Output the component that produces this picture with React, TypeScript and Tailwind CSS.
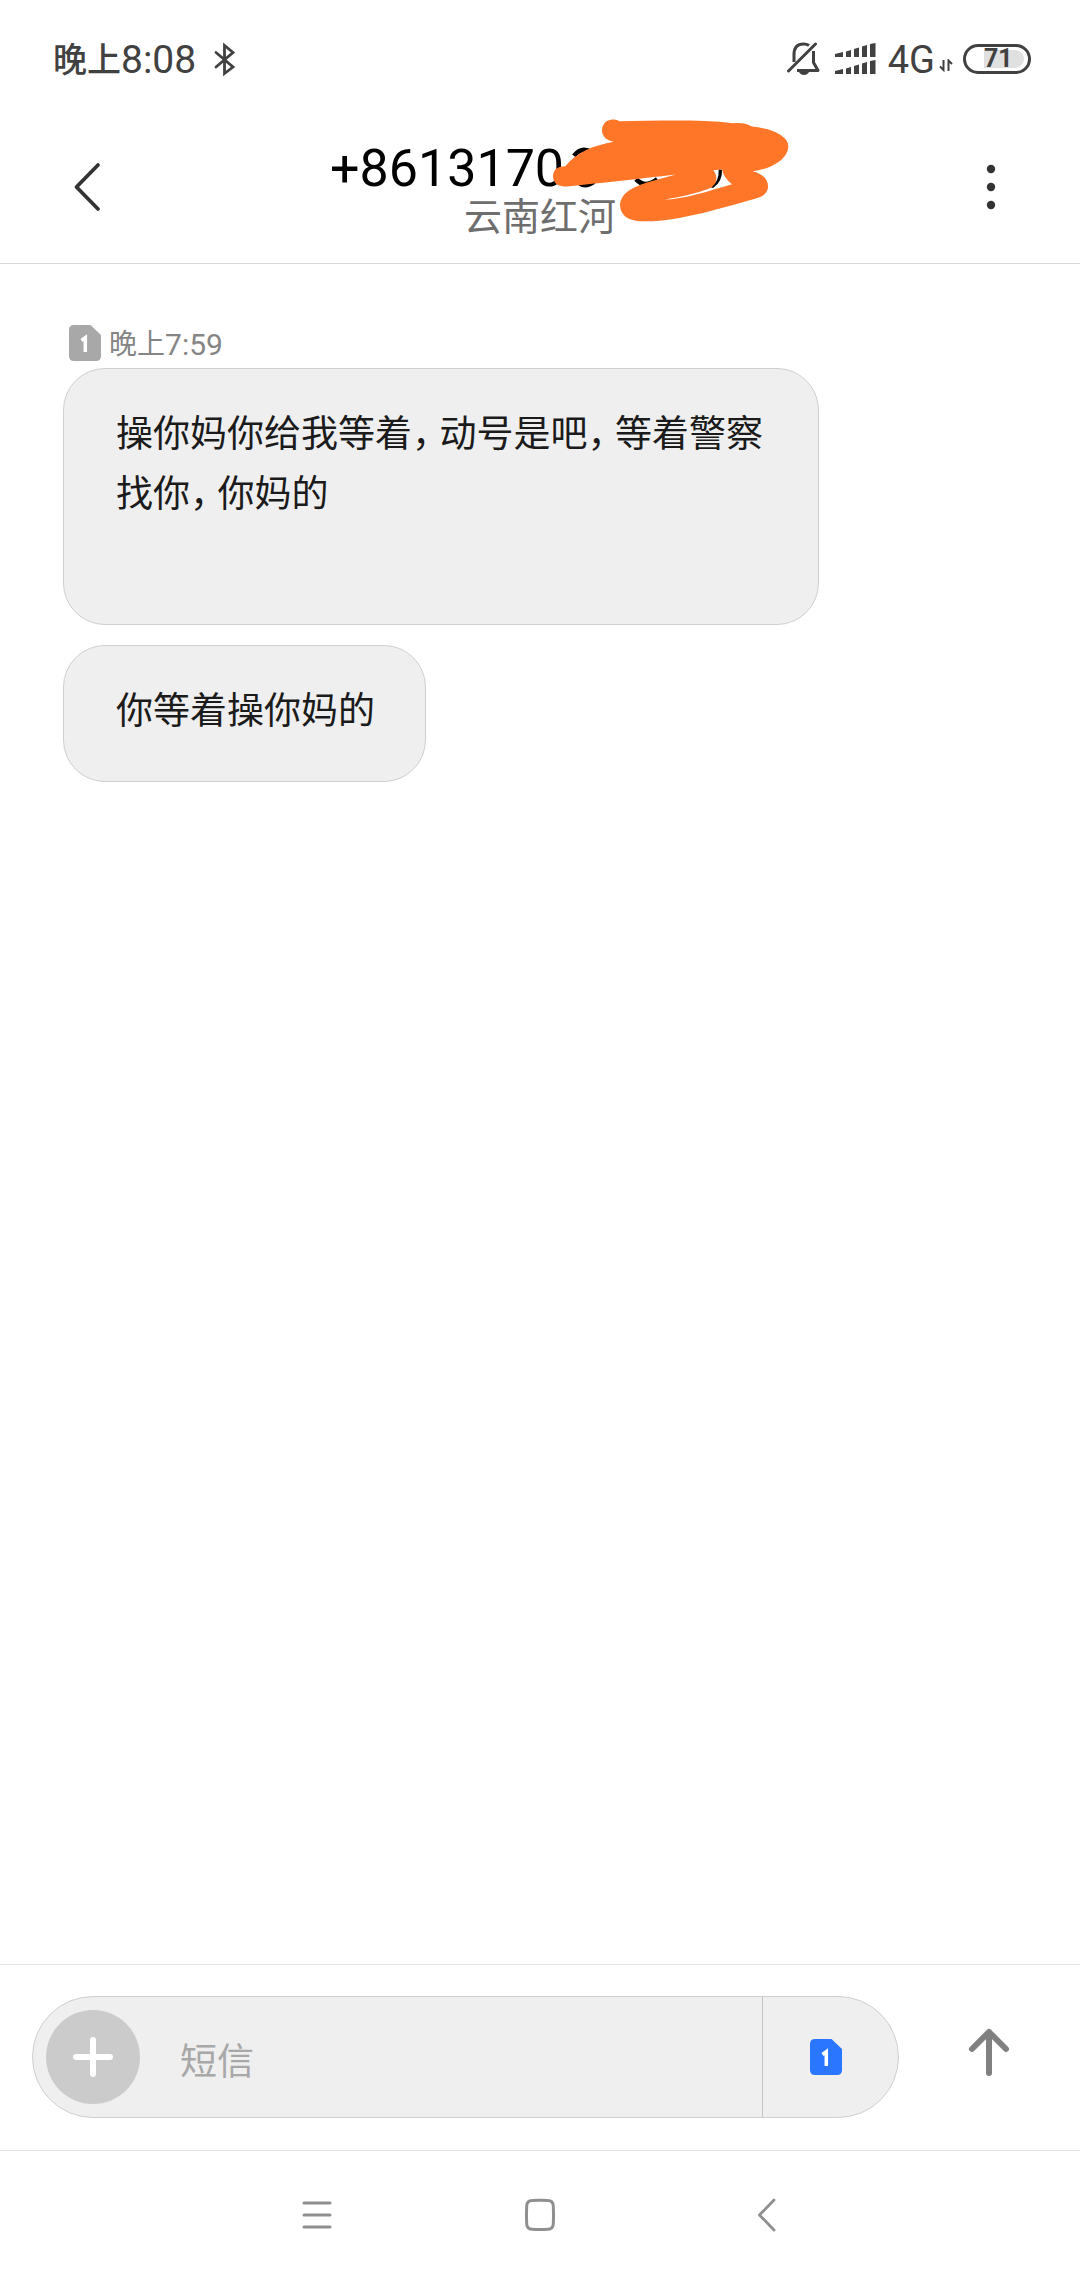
import { useState } from 'react';
import type { ReactNode } from 'react';

function SimIcon({ className }: { className: string }) {
  return (
    <svg width="32" height="36" viewBox="0 0 32 36" className={className} aria-hidden="true">
      <path d="M5 0H21.500L32 10V31Q32 36 27 36H5Q0 36 0 31V5Q0 0 5 0Z" fill="currentColor" />
      <path d="M12.500 15.500L16.300 12.700V27" fill="none" stroke="#fff" strokeWidth="3.500" />
    </svg>
  );
}

function BluetoothIcon() {
  return (
    <svg width="22" height="36" viewBox="0 0 22 36" className="ml-[18px]" fill="none" stroke="currentColor" strokeWidth="2.800" strokeLinecap="round" strokeLinejoin="miter" aria-hidden="true">
      <path d="M2 10.500L19 25L10.500 31.500V3.500L19 10.500L2 25" />
    </svg>
  );
}

function MutedBellIcon() {
  return (
    <svg width="34" height="34" viewBox="0 0 34 34" fill="none" stroke="currentColor" strokeWidth="3" aria-hidden="true">
      <path d="M1.500 29L28.500 2" strokeLinecap="round" />
      <path d="M7 20V12.500Q7 2 16.500 2Q20 2 22 3.500" />
      <path d="M26.500 9V20.500L31 28.500H10" strokeLinejoin="round" />
      <path d="M12 30H22Q20.500 33 17 33T12 30Z" fill="currentColor" stroke="none" />
    </svg>
  );
}

function SignalIcon() {
  return (
    <svg width="41" height="32" viewBox="0 0 41 32" fill="currentColor" aria-hidden="true">
      <path d="M0 11L8 9V14H0ZM11 8.500L16 7V14H11ZM19 6L24 4.500V14H19ZM27 3.500L32 2V14H27ZM35 1L40.500 0V14H35Z" />
      <path d="M0 28L8 26V31H0ZM11 25.500L16 24V31H11ZM19 23L24 21.500V31H19ZM27 20.500L32 19V31H27ZM35 18L40.500 17V31H35Z" />
    </svg>
  );
}

function DataArrowsIcon() {
  return (
    <svg width="14" height="13" viewBox="0 0 14 13" fill="none" stroke="currentColor" strokeWidth="2" aria-hidden="true">
      <path d="M1 7.500L4.500 11V1M13 5L9.500 1.500V12" />
    </svg>
  );
}

function Scribble() {
  return (
    <svg width="240" height="107" viewBox="750 50 720 320" className="absolute -top-6 left-[221px]" aria-hidden="true">
      <g fill="none" stroke="#000" strokeWidth="14">
        <path d="M822 166Q845 136 876 156" />
        <path d="M834 246Q855 262 882 244" />
        <path d="M1008 236Q1036 266 1072 236" />
      </g>
      <path
        fill="#ff7629"
        d="M906 90C906 62 935 50 958 62C1060 62 1180 55 1300 68C1320 66 1340 68 1356 78C1420 84 1466 108 1465 138C1462 180 1410 206 1358 212C1390 220 1406 238 1404 262C1400 282 1385 290 1360 296C1270 320 1130 366 1025 362C985 362 960 345 960 312C965 275 1000 260 1040 246L1128 222C1010 236 900 248 800 258C775 260 759 248 759 226C760 205 775 197 796 197C830 155 880 135 942 124C920 120 906 108 906 90Z"
      />
      <path fill="#fff" d="M1092 297C1150 289 1215 272 1240 258C1252 240 1252 225 1240 209L1266 207C1270 225 1280 238 1296 251C1230 270 1150 297 1092 297Z" />
      <path fill="#000" d="M1256 208H1266Q1268 242 1240 262L1234 262Q1258 240 1256 208Z" />
    </svg>
  );
}

function StatusBar() {
  return (
    <div className="flex h-[118px] items-center justify-between pl-[53px] pr-[49px] text-[#414141]">
      <div className="flex items-center pt-[2px]">
        <span className="text-[34px] leading-[40px] font-medium">晚上</span>
        <span className="text-[39px] leading-[40px]">8:08</span>
        <BluetoothIcon />
      </div>
      <div className="flex items-center">
        <MutedBellIcon />
        <span className="ml-[14px] flex"><SignalIcon /></span>
        <span className="ml-3 pt-[2px] text-[38px] leading-[40px]">4G</span>
        <span className="ml-1 mt-3 flex"><DataArrowsIcon /></span>
        <div className="ml-[10px] flex h-[30px] w-[68px] items-center justify-end rounded-full border-[3px] border-current pr-[4px]">
          <div className="flex h-[18px] w-10 items-center rounded-r-full bg-[#e0e0e0]">
            <span className="text-[25px] leading-[26px] font-bold">71</span>
          </div>
        </div>
      </div>
    </div>
  );
}

function Header() {
  return (
    <header className="flex h-[146px] items-start justify-between border-b border-[#d8d8d8]">
      <button type="button" aria-label="返回" className="flex h-[138px] w-[175px] items-center pl-[73px] text-[#333]">
        <svg width="30" height="52" viewBox="0 0 30 52" fill="none" stroke="currentColor" strokeWidth="3.800" strokeLinecap="round" strokeLinejoin="round" aria-hidden="true">
          <path d="M25 4L3.500 26L25 48" />
        </svg>
      </button>
      <div className="relative w-[422px] pt-[25px]">
        <h1 className="pl-px text-[52px] leading-[52px] text-black">+8613170</h1>
        <p className="text-center text-[38px] leading-[44px] text-[#6e6e6e]">云南红河</p>
        <div className="absolute top-[23px] left-0">
          <Scribble />
        </div>
      </div>
      <button type="button" aria-label="更多" className="flex h-[138px] w-[175px] items-center justify-center pr-[3px] text-[#333]">
        <svg width="10" height="46" viewBox="0 0 10 46" fill="currentColor" aria-hidden="true">
          <circle cx="5" cy="5" r="4.200" />
          <circle cx="5" cy="23" r="4.200" />
          <circle cx="5" cy="41" r="4.200" />
        </svg>
      </button>
    </header>
  );
}

function Comma() {
  return <span className="mr-[9px] [font-feature-settings:'halt']">，</span>;
}

function Bubble({ children, className }: { children: ReactNode; className: string }) {
  return (
    <div className={`rounded-[42px] border border-[#cfcfcf] bg-[#efefef] pr-[50px] pl-[52px] pt-[36px] pb-[39px] text-[37px] leading-[60px] text-[#1b1b1b] ${className}`}>
      {children}
    </div>
  );
}

function Composer() {
  const [text, setText] = useState('');
  return (
    <form className="flex items-center border-t border-[#e2e2e2] pt-[31px] pb-8 pl-8" onSubmit={(e) => e.preventDefault()}>
      <div className="flex h-[122px] min-w-0 flex-1 items-center overflow-hidden rounded-full border border-[#cfcfcf] bg-[#efefef]">
        <button type="button" aria-label="添加" className="ml-[13px] flex size-[94px] shrink-0 items-center justify-center rounded-full bg-[#cbcbcb] text-white">
          <svg width="40" height="40" viewBox="0 0 40 40" fill="none" stroke="currentColor" strokeWidth="6" strokeLinecap="round" aria-hidden="true">
            <path d="M20 3V37M3 20H37" />
          </svg>
        </button>
        <input
          type="text"
          aria-label="短信"
          placeholder="短信"
          value={text}
          onChange={(e) => setText(e.target.value)}
          className="h-full min-w-0 flex-1 bg-transparent px-10 pt-[10px] text-[37px] leading-[60px] text-[#1b1b1b] outline-none placeholder:text-[#a8a8a8]"
        />
        <button type="button" aria-label="选择 SIM 卡 1" className="flex h-full w-[136px] shrink-0 items-center justify-center border-l border-[#c4c4c4] pr-[10px]">
          <SimIcon className="text-[#2b76ff]" />
        </button>
      </div>
      <button type="submit" aria-label="发送" className="flex h-[122px] w-[181px] shrink-0 items-center justify-center pr-px pb-[11px] text-[#808080]">
        <svg width="42" height="48" viewBox="0 0 42 48" fill="none" stroke="currentColor" strokeWidth="6" strokeLinecap="round" strokeLinejoin="round" aria-hidden="true">
          <path d="M21 45V4M4 21L21 4L38 21" />
        </svg>
      </button>
    </form>
  );
}

function NavBar() {
  return (
    <nav className="flex h-[130px] items-center justify-center border-t border-[#e2e2e2] pb-[2px] text-[#8f8f8f]">
      <button type="button" aria-label="最近任务" className="flex h-full w-[225px] items-center justify-center pl-1">
        <svg width="30" height="34" viewBox="0 0 30 34" stroke="currentColor" strokeWidth="3" strokeLinecap="round" aria-hidden="true">
          <path d="M2 5H28M2 17H28M2 29H28" />
        </svg>
      </button>
      <button type="button" aria-label="主屏幕" className="flex h-full w-[225px] items-center justify-center">
        <svg width="32" height="34" viewBox="0 0 32 34" fill="none" stroke="currentColor" strokeWidth="3" aria-hidden="true">
          <path d="M8 2.500Q16 2 24 2.500Q29 2.500 29.300 8Q29.800 17 29.300 26Q29 31 24 31.300Q16 31.800 8 31.300Q3 31 2.700 26Q2.200 17 2.700 8Q3 2.500 8 2.500Z" />
        </svg>
      </button>
      <button type="button" aria-label="后退" className="flex h-full w-[225px] items-center justify-center pl-1">
        <svg width="18" height="34" viewBox="0 0 18 34" fill="none" stroke="currentColor" strokeWidth="2.800" strokeLinecap="round" strokeLinejoin="round" aria-hidden="true">
          <path d="M16 2L1.500 17L16 32" />
        </svg>
      </button>
    </nav>
  );
}

export default function App() {
  return (
    <div className="flex min-h-screen flex-col bg-white font-[Roboto,'Noto_Sans_CJK_SC',sans-serif]" lang="zh-CN">
      <StatusBar />
      <Header />
      <main className="flex flex-1 flex-col items-start pt-[61px] pl-[63px]">
        <div className="flex h-[43px] items-start pl-[6px] text-[#858585]">
          <SimIcon className="text-[#a8a8a8]" />
          <div className="ml-2 flex items-center pt-px">
            <span className="text-[28px] leading-[38px]">晚上</span>
            <span className="text-[30px] leading-[38px]">7:59</span>
          </div>
        </div>
        <Bubble className="w-[756px] max-w-full">
          <p>
            操你妈你给我等着<Comma />动号是吧<Comma />等着警察<wbr />找你<Comma />你妈的
          </p>
          <p aria-hidden="true" className="h-[60px]" />
        </Bubble>
        <Bubble className="mt-5">
          <p>你等着操你妈的</p>
        </Bubble>
      </main>
      <Composer />
      <NavBar />
    </div>
  );
}
